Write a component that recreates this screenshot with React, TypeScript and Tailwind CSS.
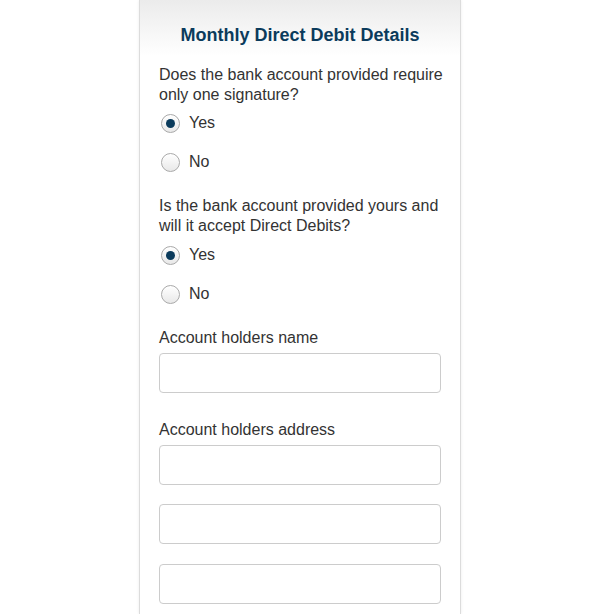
import React from 'react';

interface RadioProps {
  label: string;
  checked?: boolean;
  className?: string;
}

function Radio({ label, checked, className }: RadioProps) {
  return (
    <label className={`flex items-center h-5 ${className ?? ''}`}>
      <span className="ml-[2px] w-[19px] h-[19px] rounded-full border border-[#a9a9a9] bg-gradient-to-b from-white to-[#e8e8e8] flex items-center justify-center shadow-[inset_0_1px_1px_rgba(255,255,255,0.8)]">
        {checked && <span className="w-[9px] h-[9px] rounded-full bg-[#0b3b5c]" />}
      </span>
      <span className="ml-[9px] text-base text-[#333]">{label}</span>
    </label>
  );
}

function TextInput({ className }: { className?: string }) {
  return (
    <input
      type="text"
      className={`block w-[282px] h-10 rounded border border-[#cccccc] bg-white px-3 text-base outline-none ${className ?? ''}`}
    />
  );
}

export default function App() {
  return (
    <div
      className="min-h-[614px] bg-white flex justify-center"
      style={{ fontFamily: '"Liberation Sans", Arial, sans-serif' }}
    >
      <div className="w-[322px] h-[614px] border-x border-[#dcdcdc] shadow-[0_0_3px_rgba(0,0,0,0.08)] bg-white overflow-hidden">
        <div className="bg-gradient-to-b from-[#ebebeb] to-white pt-6 h-[56px]">
          <h1 className="text-center text-[18px] leading-[22px] font-bold text-[#0b3b5c]">
            Monthly Direct Debit Details
          </h1>
        </div>
        <div className="pl-[19px] pr-[17px] text-base text-[#333]">
          <p className="mt-[9px] leading-5">
            Does the bank account provided require only one signature?
          </p>
          <Radio label="Yes" checked className="mt-2" />
          <Radio label="No" className="mt-[19px]" />

          <p className="mt-6 leading-5">
            Is the bank account provided yours and will it accept Direct Debits?
          </p>
          <Radio label="Yes" checked className="mt-[9px]" />
          <Radio label="No" className="mt-[19px]" />

          <p className="mt-6 leading-5">Account holders name</p>
          <TextInput className="mt-[5px]" />

          <p className="mt-[27px] leading-5">Account holders address</p>
          <TextInput className="mt-[5px]" />
          <TextInput className="mt-[19px]" />
          <TextInput className="mt-5" />
        </div>
      </div>
    </div>
  );
}
